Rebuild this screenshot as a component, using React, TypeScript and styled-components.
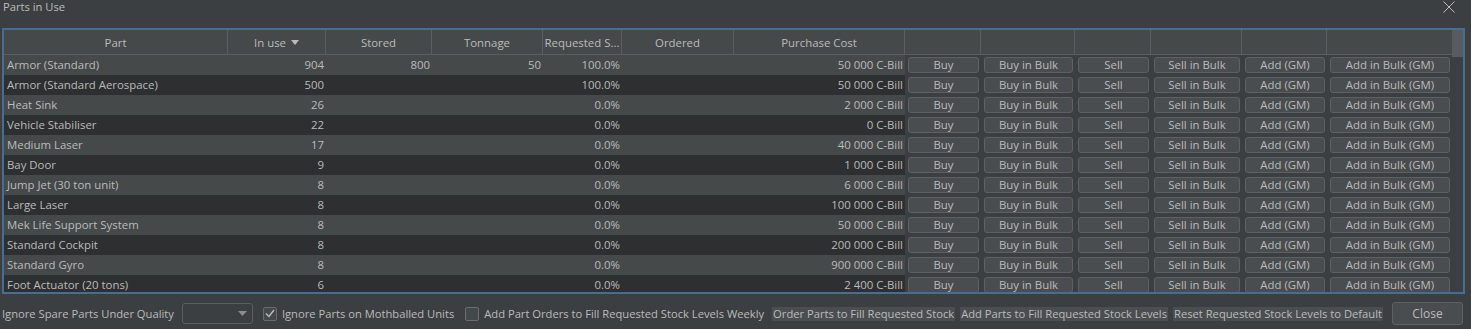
import * as React from "react";
import styled, { createGlobalStyle } from "styled-components";

const GlobalStyle = createGlobalStyle`
  html, body {
    margin: 0;
    padding: 0;
    background: #3c3f41;
  }
  body {
    font-family: "Open Sans", "Noto Sans", sans-serif;
    font-size: 11.2px;
    color: #bbbbbb;
  }
`;

const COLUMNS = "224px 98px 106px 111px 79px 112px 171px 76px 94px 76px 91px 85px 125px";

const SWindow = styled.div`
  width: 1471px;
  height: 329px;
  display: flex;
  flex-direction: column;
  overflow: hidden;
`;

const STitleBar = styled.div`
  height: 28px;
  display: flex;
  justify-content: space-between;
  align-items: flex-start;
  padding: 0 16px 0 3px;
  line-height: 14px;
`;

const SCloseIcon = styled.svg`
  margin-top: 1px;
  display: block;
`;

const SFrame = styled.div`
  margin: 0 6px 0 2px;
  height: 262px;
  border: 2px solid #466d94;
  display: flex;
`;

const SViewport = styled.div`
  width: 1448px;
  overflow: hidden;
  font-size: 11.4px;
`;

const SScrollbar = styled.div`
  width: 11px;
  background: #3c3f41;
  display: flex;
  flex-direction: column;
`;

const SThumb = styled.div`
  height: 27px;
  background: #595c5e;
`;

const SHeaderRow = styled.div`
  display: grid;
  grid-template-columns: ${COLUMNS};
  height: 25px;
  background: #45494a;
  border-bottom: 1px solid #5b5e60;
  box-sizing: border-box;
`;

const SHeaderCell = styled.div`
  display: flex;
  align-items: center;
  justify-content: center;
  gap: 5px;
  border-right: 1px solid #5b5e60;
  white-space: nowrap;
  overflow: hidden;
  &:last-child {
    border-right: none;
  }
`;

const SRow = styled.div<{ $dark: boolean }>`
  display: grid;
  grid-template-columns: ${COLUMNS};
  height: 20px;
  background: ${(p) => (p.$dark ? "#2d2f30" : "#45494a")};
`;

const SCell = styled.div<{ $right?: boolean }>`
  line-height: 20px;
  padding: 0 ${(p) => (p.$right ? "2px" : "3px")} 0 3px;
  text-align: ${(p) => (p.$right ? "right" : "left")};
  white-space: nowrap;
  overflow: hidden;
`;

const SButtonCell = styled.div`
  background: #3c3f41;
  padding: 2px 2px 2px 3px;
  display: flex;
`;

const STableButton = styled.button`
  flex: 1;
  height: 16px;
  margin: 0;
  padding: 0;
  border: 1px solid #5e6163;
  border-radius: 3px;
  background: #4a4d4f;
  color: #bbbbbb;
  font: inherit;
  line-height: 14px;
`;

const SToolbar = styled.div`
  height: 35px;
  display: flex;
  align-items: center;
  padding: 4px 8px 0 2px;
  box-sizing: border-box;
  white-space: nowrap;
  & > * {
    flex-shrink: 0;
  }
`;

const SLabel = styled.span<{ $gap?: number }>`
  margin-left: ${(p) => p.$gap ?? 0}px;
`;

const SCombo = styled.div`
  width: 71px;
  height: 21px;
  box-sizing: border-box;
  margin-left: 8px;
  border: 1px solid #5b5e60;
  border-radius: 3px;
  background: #3c3f41;
  display: flex;
  align-items: center;
  justify-content: flex-end;
  padding-right: 5px;
`;

const SCheck = styled.div<{ $gap: number }>`
  width: 14px;
  height: 14px;
  box-sizing: border-box;
  margin-left: ${(p) => p.$gap}px;
  border: 1px solid #6b6b6b;
  border-radius: 2px;
  background: #43494a;
  display: flex;
  align-items: center;
  justify-content: center;
`;

const SFlatButton = styled.button<{ $gap: number }>`
  margin: 0 0 0 ${(p) => p.$gap}px;
  padding: 0 1px;
  height: 14px;
  border: none;
  background: #4a4e50;
  color: #bbbbbb;
  font: inherit;
  line-height: 14px;
`;

const SCloseButton = styled.button`
  margin: 0 0 0 auto;
  width: 71px;
  height: 23px;
  border: 1px solid #5e6163;
  border-radius: 3px;
  background: #4a4d4f;
  color: #bbbbbb;
  font: inherit;
  font-size: 12px;
`;

interface IPart {
  name: string;
  inUse: string;
  stored: string;
  tonnage: string;
  requested: string;
  cost: string;
}

const PARTS: IPart[] = [
  { name: "Armor (Standard)", inUse: "904", stored: "800", tonnage: "50", requested: "100.0%", cost: "50 000 C-Bill" },
  { name: "Armor (Standard Aerospace)", inUse: "500", stored: "", tonnage: "", requested: "100.0%", cost: "50 000 C-Bill" },
  { name: "Heat Sink", inUse: "26", stored: "", tonnage: "", requested: "0.0%", cost: "2 000 C-Bill" },
  { name: "Vehicle Stabiliser", inUse: "22", stored: "", tonnage: "", requested: "0.0%", cost: "0 C-Bill" },
  { name: "Medium Laser", inUse: "17", stored: "", tonnage: "", requested: "0.0%", cost: "40 000 C-Bill" },
  { name: "Bay Door", inUse: "9", stored: "", tonnage: "", requested: "0.0%", cost: "1 000 C-Bill" },
  { name: "Jump Jet (30 ton unit)", inUse: "8", stored: "", tonnage: "", requested: "0.0%", cost: "6 000 C-Bill" },
  { name: "Large Laser", inUse: "8", stored: "", tonnage: "", requested: "0.0%", cost: "100 000 C-Bill" },
  { name: "Mek Life Support System", inUse: "8", stored: "", tonnage: "", requested: "0.0%", cost: "50 000 C-Bill" },
  { name: "Standard Cockpit", inUse: "8", stored: "", tonnage: "", requested: "0.0%", cost: "200 000 C-Bill" },
  { name: "Standard Gyro", inUse: "8", stored: "", tonnage: "", requested: "0.0%", cost: "900 000 C-Bill" },
  { name: "Foot Actuator (20 tons)", inUse: "6", stored: "", tonnage: "", requested: "0.0%", cost: "2 400 C-Bill" },
];

const ACTIONS = ["Buy", "Buy in Bulk", "Sell", "Sell in Bulk", "Add (GM)", "Add in Bulk (GM)"];

const HEADERS = ["Part", "In use", "Stored", "Tonnage", "Requested S...", "Ordered", "Purchase Cost"];

const SortArrow = () => (
  <svg width="8" height="5" viewBox="0 0 8 5">
    <path d="M0 0 L8 0 L4 5 Z" fill="#bbbbbb" />
  </svg>
);

const App = () => (
  <SWindow>
    <GlobalStyle />
    <STitleBar>
      <span>Parts in Use</span>
      <SCloseIcon width="12" height="12" viewBox="0 0 12 12">
        <path d="M0.5 0.5 L11.5 11.5 M11.5 0.5 L0.5 11.5" stroke="#bbbbbb" strokeWidth="1" />
      </SCloseIcon>
    </STitleBar>
    <SFrame>
      <SViewport>
        <SHeaderRow>
          {HEADERS.map((h) => (
            <SHeaderCell key={h}>
              {h}
              {h === "In use" && <SortArrow />}
            </SHeaderCell>
          ))}
          {ACTIONS.map((a) => (
            <SHeaderCell key={a} />
          ))}
        </SHeaderRow>
        {PARTS.map((p, i) => (
          <SRow key={p.name} $dark={i % 2 === 1}>
            <SCell>{p.name}</SCell>
            <SCell $right>{p.inUse}</SCell>
            <SCell $right>{p.stored}</SCell>
            <SCell $right>{p.tonnage}</SCell>
            <SCell $right>{p.requested}</SCell>
            <SCell $right />
            <SCell $right>{p.cost}</SCell>
            {ACTIONS.map((a) => (
              <SButtonCell key={a}>
                <STableButton>{a}</STableButton>
              </SButtonCell>
            ))}
          </SRow>
        ))}
      </SViewport>
      <SScrollbar>
        <SThumb />
      </SScrollbar>
    </SFrame>
    <SToolbar>
      <SLabel>Ignore Spare Parts Under Quality</SLabel>
      <SCombo>
        <svg width="9" height="5" viewBox="0 0 9 5">
          <path d="M0 0 L9 0 L4.5 5 Z" fill="#8c8c8c" />
        </svg>
      </SCombo>
      <SCheck $gap={10}>
        <svg width="10" height="9" viewBox="0 0 10 9">
          <path d="M1 4.5 L4 7.5 L9 1" stroke="#bbbbbb" strokeWidth="1.4" fill="none" />
        </svg>
      </SCheck>
      <SLabel $gap={5}>Ignore Parts on Mothballed Units</SLabel>
      <SCheck $gap={11} />
      <SLabel $gap={5}>Add Part Orders to Fill Requested Stock Levels Weekly</SLabel>
      <SFlatButton $gap={8}>Order Parts to Fill Requested Stock</SFlatButton>
      <SFlatButton $gap={5}>Add Parts to Fill Requested Stock Levels</SFlatButton>
      <SFlatButton $gap={5}>Reset Requested Stock Levels to Default</SFlatButton>
      <SCloseButton>Close</SCloseButton>
    </SToolbar>
  </SWindow>
);

export default App;
